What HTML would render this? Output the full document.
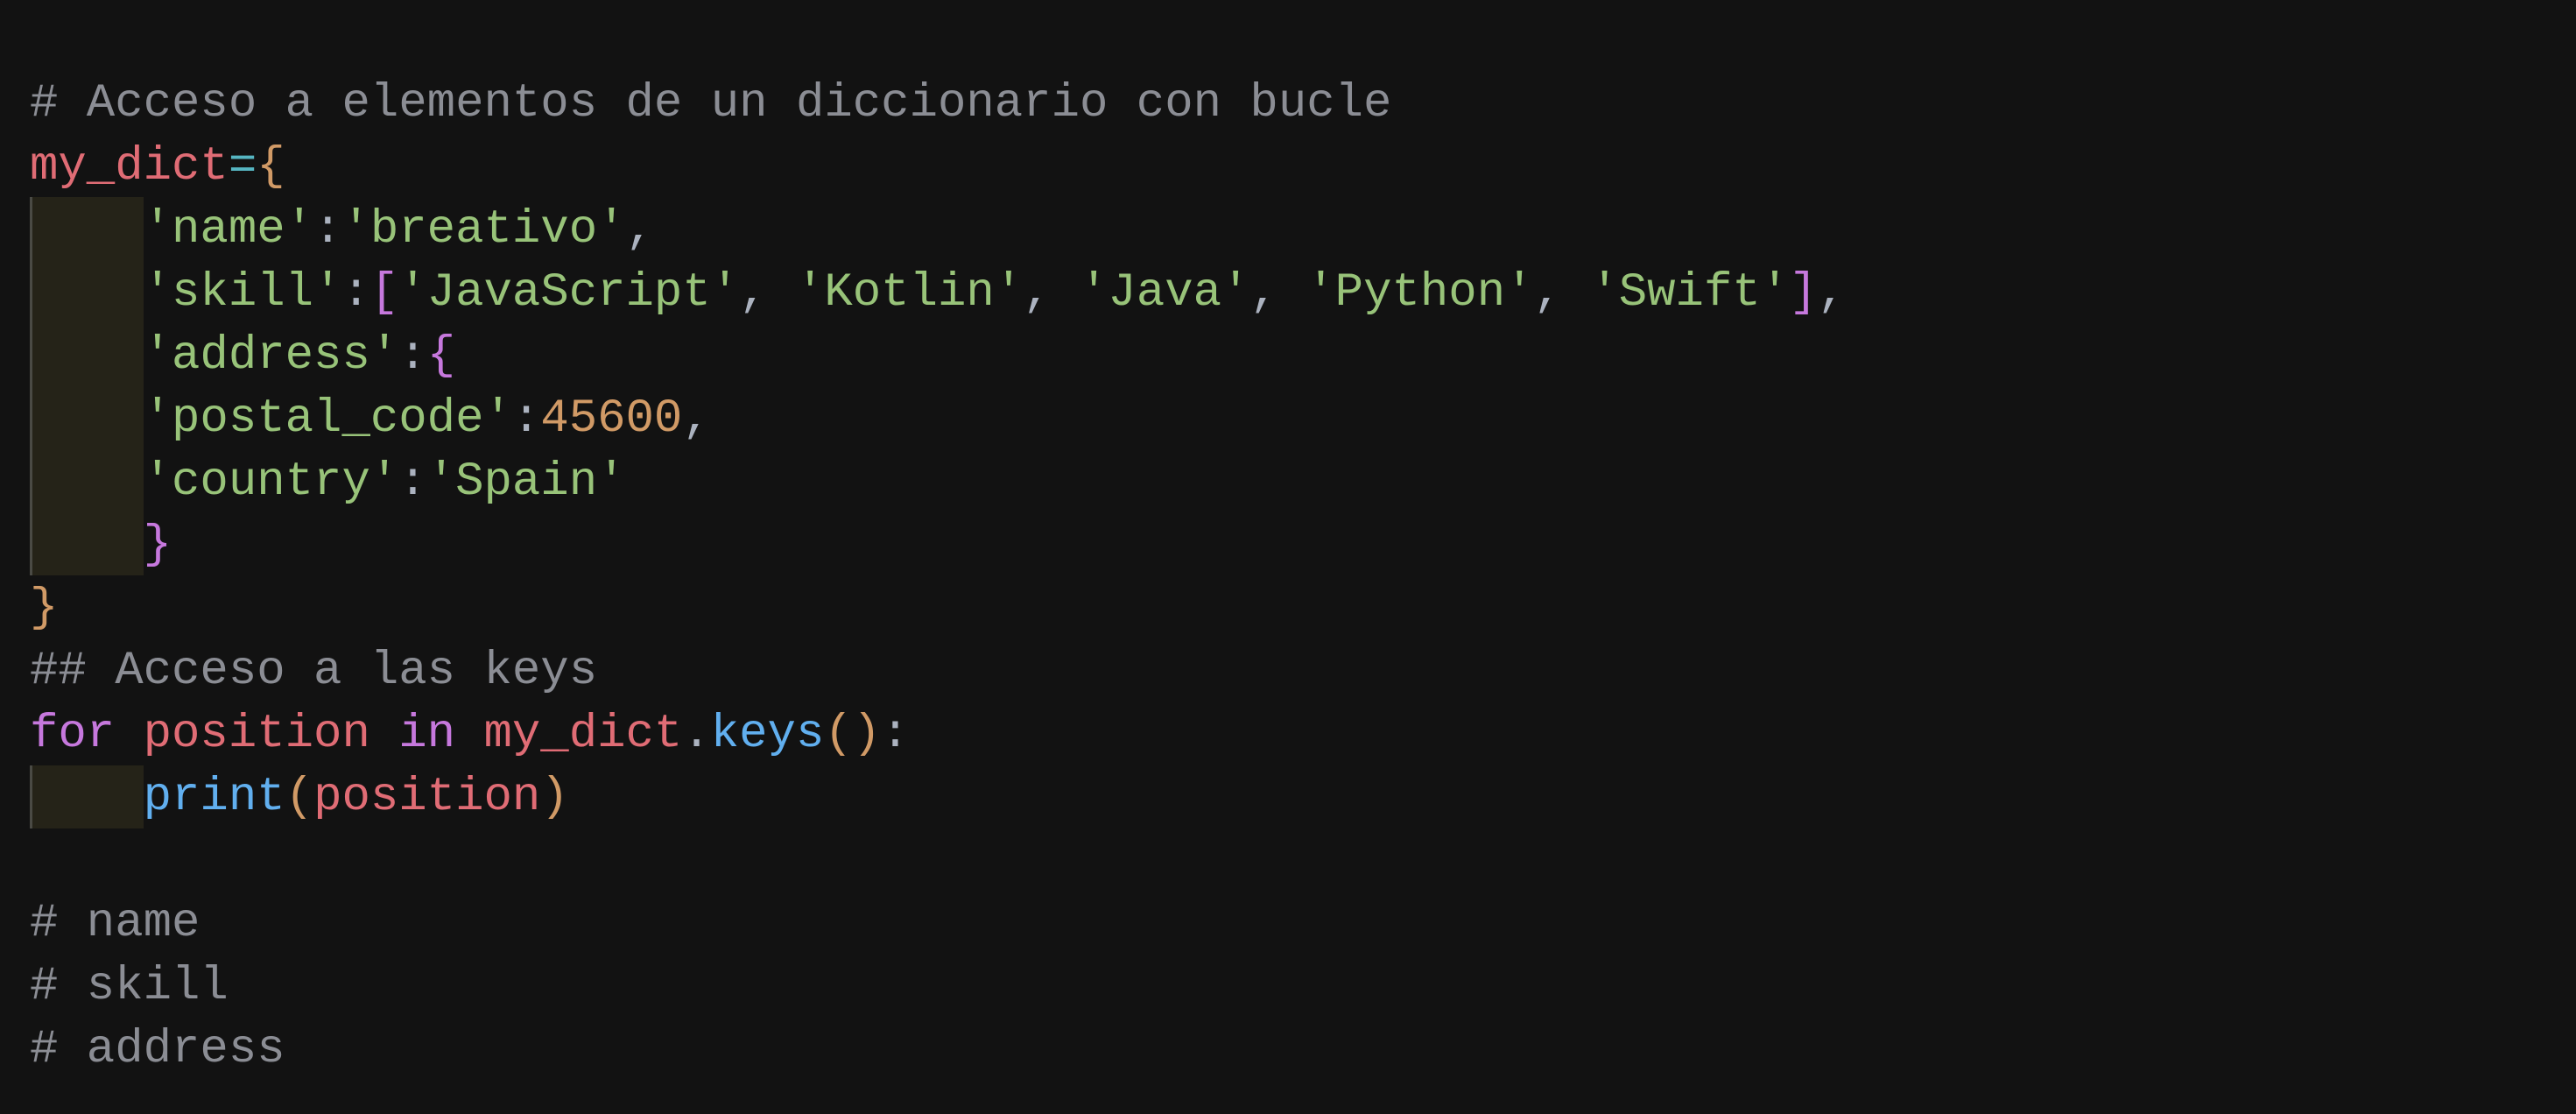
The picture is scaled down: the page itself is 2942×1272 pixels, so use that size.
<!DOCTYPE html>
<html><head><meta charset="utf-8"><style>
html,body{margin:0;padding:0;background:#121212;width:2942px;height:1272px;overflow:hidden}
pre{margin:0;position:absolute;left:34px;top:83px;font-family:"Liberation Mono",monospace;font-size:54px;line-height:72px;color:#abb2bf}
.c{color:#8b8d94}.r{color:#e06c75}.g{color:#98c379}.o{color:#d19a66}.p{color:#c678dd}.b{color:#61afef}.cy{color:#56b6c2}
.blk{position:absolute;left:34px;width:130px;background:#252318;border-left:3px solid #4a4a44;box-sizing:border-box}
</style></head><body>
<div class="blk" style="top:225px;height:432px"></div>
<div class="blk" style="top:874px;height:72px"></div>
<pre><span class="c"># Acceso a elementos de un diccionario con bucle</span>
<span class="r">my_dict</span><span class="cy">=</span><span class="o">{</span>
    <span class="g">'name'</span>:<span class="g">'breativo'</span>,
    <span class="g">'skill'</span>:<span class="p">[</span><span class="g">'JavaScript'</span>, <span class="g">'Kotlin'</span>, <span class="g">'Java'</span>, <span class="g">'Python'</span>, <span class="g">'Swift'</span><span class="p">]</span>,
    <span class="g">'address'</span>:<span class="p">{</span>
    <span class="g">'postal_code'</span>:<span class="o">45600</span>,
    <span class="g">'country'</span>:<span class="g">'Spain'</span>
    <span class="p">}</span>
<span class="o">}</span>
<span class="c">## Acceso a las keys</span>
<span class="p">for</span> <span class="r">position</span> <span class="p">in</span> <span class="r">my_dict</span>.<span class="b">keys</span><span class="o">()</span>:
    <span class="b">print</span><span class="o">(</span><span class="r">position</span><span class="o">)</span>

<span class="c"># name</span>
<span class="c"># skill</span>
<span class="c"># address</span></pre>
</body></html>
